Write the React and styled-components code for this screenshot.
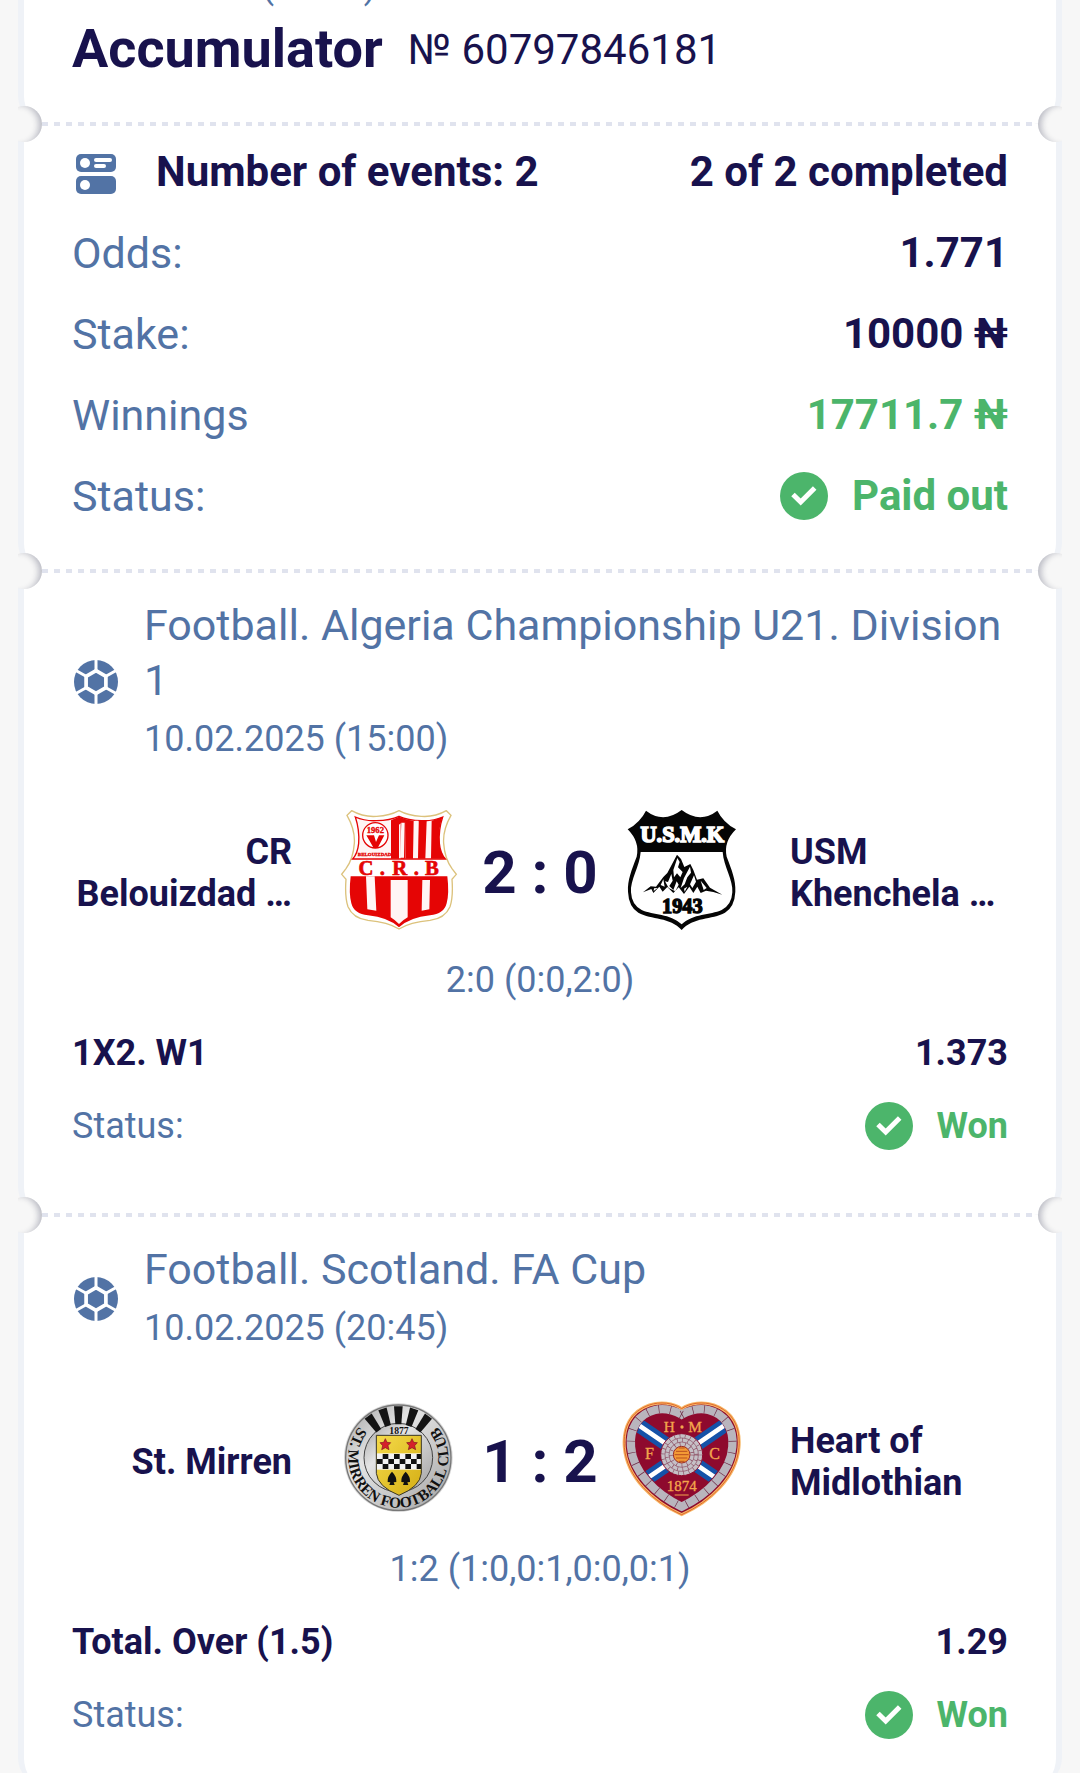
import styled, { createGlobalStyle, css } from 'styled-components';

const NAVY = '#18124d';
const BLUE = '#5273a5';
const GREEN = '#4cb56b';
const PAGE = '#f7f7f7';

const GlobalStyle = createGlobalStyle`
    body {
        margin: 0;
        background: ${PAGE};
        color: ${NAVY};
        font-family: Roboto, "Noto Sans", sans-serif;
    }
    *, *::before, *::after {
        box-sizing: border-box;
    }
    svg {
        display: block;
        flex: none;
    }
`;

// the page is scrolled down a little, so the bet date sits on the top edge
const Ticket = styled.main`
    margin: -35px 18px 0;
    overflow: hidden;
`;

const Section = styled.section`
    padding: ${props => props.$top}px 48px ${props => props.$bottom}px;
    background: #fff;
    border: solid #eff2f7;
    border-width: 0 6px;
    border-radius: 0 0 28px 28px;
`;

const Divider = styled.div`
    position: relative;
    z-index: 1;
    height: 4px;
    margin: -2px 24px;
    background: repeating-linear-gradient(90deg, #e0e3ee 0 6px, transparent 6px 12px);

    &::before, &::after {
        content: '';
        position: absolute;
        top: -16px;
        width: 36px;
        height: 36px;
        border-radius: 50%;
        background: ${PAGE};
    }
    &::before {
        left: -36px;
        box-shadow: inset -6px 1px 6px -3px rgba(24, 30, 60, 0.28);
        clip-path: inset(0 0 0 12px);
    }
    &::after {
        right: -36px;
        box-shadow: inset 6px 1px 6px -3px rgba(24, 30, 60, 0.28);
        clip-path: inset(0 12px 0 0);
    }
`;

const Heading = styled.header`
    display: flex;
    align-items: center;
    gap: 25px;
    margin-top: 9px;
`;

const Title = styled.h1`
    margin: 0;
    font-size: 54px;
    line-height: 66px;
    font-weight: 700;
`;

const BetNumber = styled.span`
    padding-top: 2px;
    font-size: 42px;
    line-height: 48px;
`;

const DateText = styled.time`
    display: block;
    color: ${BLUE};
    font-size: 36px;
    line-height: ${props => props.$small ? '42px' : '54px'};
    margin-top: ${props => props.$small ? '0' : '4px'};
`;

const Rows = styled.div`
    display: flex;
    flex-direction: column;
    gap: ${props => props.$small ? '25px' : '33px'};
    font-size: ${props => props.$small ? '36px' : '42px'};
    line-height: 48px;
`;

const Row = styled.div`
    display: flex;
    align-items: center;
    justify-content: space-between;
`;

const Label = styled.span`
    color: ${BLUE};
    ${props => props.$large && css`font-size: 43px;`}
`;

const Value = styled.span`
    display: flex;
    align-items: center;
    gap: ${props => props.$wide ? '36px' : '24px'};
    font-weight: 700;
    ${props => props.$good && css`color: ${GREEN};`}
`;

const IconSlot = styled.span`
    display: flex;
    flex: none;
    justify-content: center;
    width: 48px;
`;

const League = styled.header`
    display: flex;
    align-items: center;
    gap: 24px;
`;

const LeagueName = styled.h2`
    margin: 0;
    color: ${BLUE};
    font-size: 43px;
    line-height: 55px;
    font-weight: 400;
`;

const Game = styled.div`
    display: grid;
    grid-template-columns: 1fr 120px 162px 120px 1fr;
    align-items: center;
    margin: 44px 0 20px;

    svg {
        margin-bottom: 6px;
    }
`;

const Team = styled.span`
    padding: ${props => props.$home ? '0 47px 0 0' : '0 0 0 49px'};
    text-align: ${props => props.$home ? 'right' : 'left'};
    font-size: 36px;
    line-height: 42px;
    font-weight: 700;
`;

const Score = styled.strong`
    text-align: center;
    font-size: 60px;
    line-height: 66px;
    font-weight: 700;
`;

const Result = styled.span`
    color: ${BLUE};
    text-align: center;
`;

function EventsIcon() {
    return (
        <svg width="40" height="44" viewBox="0 -4 40 44" aria-hidden="true">
            <rect width="40" height="18" rx="5" fill={BLUE} />
            <rect y="22" width="40" height="18" rx="5" fill={BLUE} />
            <g fill="#fff">
                <circle cx="9" cy="9" r="5" />
                <circle cx="9" cy="31" r="5" />
                <rect x="18" y="4" width="18" height="4" rx="2" />
                <rect x="18" y="10" width="12" height="4" rx="2" />
            </g>
        </svg>
    );
}

function FootballIcon() {
    return (
        <svg width="44" height="44" viewBox="0 0 44 44" aria-hidden="true">
            <circle cx="22" cy="22" r="22" fill={BLUE} />
            <g fill="none" stroke="#fff">
                <path strokeWidth="3.7" d="M22 10.6 31.9 16.3V27.7L22 33.4 12.1 27.7V16.3Z" />
                <path strokeWidth="3" d="M22 10.6V-2M22 33.4V46M31.9 16.3 43 10M31.9 27.7 43 34M12.1 16.3 1 10M12.1 27.7 1 34" />
            </g>
        </svg>
    );
}

function CheckIcon() {
    return (
        <svg width="48" height="48" viewBox="0 0 48 48" aria-hidden="true">
            <circle cx="24" cy="24" r="24" fill={GREEN} />
            <path d="M13 22.500 20.700 30 34.700 16" fill="none" stroke="#fff" strokeWidth="5" />
        </svg>
    );
}

function BelouizdadCrest() {
    return (
        <svg width="120" height="120" viewBox="27 60 360 360" role="img" aria-label="CR Belouizdad">
            <path
                d="M65 62Q100 82 140 79Q180 77 207 62Q234 77 274 79Q314 82 349 62L363 76Q338 120 341 160Q344 205 366 236L379 253L366 268Q370 320 360 350Q345 385 300 391Q240 396 207 417Q174 396 114 391Q69 385 54 350Q44 320 48 268L35 253L48 236Q70 205 73 160Q76 120 51 76Z"
                fill="#fff" stroke="#dcc27c" strokeWidth="4"
            />
            <path
                d="M76 81Q105 94 140 92Q180 91 207 79Q234 91 274 92Q309 94 338 81Q325 120 328 160Q331 190 346 207H68Q83 190 86 160Q89 120 76 81Z"
                fill="#fff5f5" stroke="#e50505" strokeWidth="4"
            />
            <path d="M183 91 207 80V206H183ZM207 80 228 88 226 206H212V100L207 104ZM228 88 251 93 249 206H227ZM266 93 290 93 286 206H264ZM305 92 337 82Q324 120 328 160Q331 190 346 206H303Z" fill="#e50505" />
            <path d="M214 98H224L222 203H210ZM254 92H265L263 203H251ZM292 96H303L301 203H289Z" fill="#fff5f5" />
            <circle cx="136" cy="136" r="38" fill="#fff" stroke="#e50505" strokeWidth="4" />
            <path d="M109 136H132L138 156 147 136H163L143 174H131Z" fill="#e50505" />
            <g fontFamily="Liberation Serif, serif" fontWeight="700" fill="#e50505" stroke="#e50505" textAnchor="middle">
                <text x="136" y="129" fontSize="26">1962</text>
                <text x="134" y="199" fontSize="15">BELOUIZDAD</text>
                <g fontSize="62" strokeWidth="2">
                    <text x="108" y="254">C</text>
                    <text x="157" y="254">.</text>
                    <text x="209" y="254">R</text>
                    <text x="259" y="254">.</text>
                    <text x="306" y="254">B</text>
                </g>
            </g>
            <path d="M62 259H352Q358 310 350 340Q342 372 300 376Q240 382 207 412Q174 382 114 376Q72 372 64 340Q56 310 62 259Z" fill="#e50505" />
            <path d="M108 259H134L139 362 112 358ZM182 270H233V382Q219 390 207 402Q195 390 182 382ZM277 270H300L298 358 275 362Z" fill="#fff5f5" />
        </svg>
    );
}

function KhenchelaCrest() {
    return (
        <svg width="120" height="120" viewBox="33 60 360 360" role="img" aria-label="USM Khenchela">
            <path
                d="M108 62Q160 102 215 60Q270 102 322 62Q340 98 378 118Q340 155 350 200C365 240 378 270 376 305Q374 350 345 368C305 390 250 380 215 420C180 380 125 390 85 368Q56 350 54 305C52 270 65 240 80 200Q90 155 53 118Q90 98 108 62Z"
                fill="#050505"
            />
            <path
                d="M92 186H338C341 230 370 270 367 307Q365 345 335 360C300 376 250 370 215 403C180 370 130 376 95 360Q65 345 63 307C60 270 89 230 92 186Z"
                fill="#fff"
            />
            <g fontFamily="Liberation Serif, serif" fontWeight="700" textAnchor="middle">
                <text x="217" y="156" fontSize="67" fill="#fff" stroke="#fff" strokeWidth="5">U.S.M.K</text>
                <text x="217" y="370" fontSize="61" fill="#050505" stroke="#050505" strokeWidth="4">1943</text>
            </g>
            <path d="M99 307 122 289 138 290 160 261 172 249 201 194 213 207 223 231 241 222 250 240 261 269 280 265 300 293 337 314 310 306 288 302 272 309 262 290 250 309 238 290 222 312 206 292 190 309 172 291 158 305 148 290 130 309 124 297Z" fill="#050505" />
            <path d="M202 204 209 216 204 232 218 246 211 262 201 250 192 262 190 240ZM240 230 243 248 232 262 224 283 212 294 222 264ZM252 256 258 275 247 294 240 283ZM184 252 188 272 178 288 190 300 200 274 206 284 196 304 176 294 165 274 174 276ZM160 268 164 290 152 285ZM272 272 290 294 281 300ZM132 295 143 294 131 303ZM222 296 232 290 224 305Z" fill="#fff" />
        </svg>
    );
}

function MirrenCrest() {
    const cells = [];
    for (let row = 0; row < 3; row++) {
        for (let col = 0; col < 8; col++) {
            if ((row + col) % 2 === 1) {
                cells.push(<rect key={`${row}-${col}`} x={141 + col * 17} y={192 + row * 15} width="17" height="15" />);
            }
        }
    }
    return (
        <svg width="120" height="120" viewBox="27 27 360 360" role="img" aria-label="St. Mirren">
            <defs>
                <linearGradient id="silver" x1="0" y1="0" x2="1" y2="1">
                    <stop offset="0" stopColor="#a2a2a2" />
                    <stop offset="0.35" stopColor="#e4e4e4" />
                    <stop offset="0.65" stopColor="#c6c6c6" />
                    <stop offset="1" stopColor="#a0a0a0" />
                </linearGradient>
                <linearGradient id="gold" x1="0" y1="0" x2="1" y2="1">
                    <stop offset="0" stopColor="#f6dc4c" />
                    <stop offset="1" stopColor="#d3ac12" />
                </linearGradient>
                <path id="ring" d="M99 97A150 150 0 1 0 311 97" />
                <clipPath id="mirrenShield">
                    <path d="M139 136H274V250Q270 290 207 316Q143 290 139 250Z" />
                </clipPath>
            </defs>
            <circle cx="205" cy="203" r="163" fill="#d6d6d6" />
            <circle cx="205" cy="203" r="158" fill="url(#silver)" stroke="#777" strokeWidth="4" />
            <circle cx="205" cy="203" r="103" fill="url(#silver)" stroke="#444" strokeWidth="3" />
            <g fill="#141414">
                {[-36, -18, 0, 18, 36].map(angle => (
                    <path key={angle} d="M192 49H218L214 103H196Z" transform={`rotate(${angle} 205 203)`} />
                ))}
            </g>
            <g fontFamily="Liberation Serif, serif" fontWeight="700" fill="#111">
                <text fontSize="46">
                    <textPath href="#ring" startOffset="50%" textAnchor="middle">ST. MIRREN FOOTBALL CLUB</textPath>
                </text>
                <text x="207" y="131" fontSize="29" textAnchor="middle">1877</text>
            </g>
            <g clipPath="url(#mirrenShield)">
                <rect x="135" y="130" width="145" height="190" fill="url(#gold)" />
                <rect x="139" y="190" width="136" height="49" fill="#f3f3f3" />
                <g fill="#111">{cells}</g>
            </g>
            <path d="M139 136H274V250Q270 290 207 316Q143 290 139 250Z" fill="none" stroke="#3a3520" strokeWidth="3" />
            <g fill="#d5202b" stroke="#7e1620" strokeWidth="2">
                <path d="M166 146 171 157 182 158 174 167 177 179 166 173 155 179 158 167 150 158 161 157Z" />
                <path d="M246 146 251 157 262 158 254 167 257 179 246 173 235 179 238 167 230 158 241 157Z" />
            </g>
            <path d="M186 245Q201 260 199 276L191 277 194 285H178L181 277 173 276Q171 260 186 245ZM227 245Q242 260 240 276L232 277 235 285H219L222 277 214 276Q212 260 227 245Z" fill="#111" />
        </svg>
    );
}

function HeartsCrest() {
    const heart = 'M215 56C190 38 150 34 118 45C62 64 38 112 43 172C50 262 130 336 215 374C300 336 380 262 387 172C392 112 368 64 312 45C280 34 240 38 215 56Z';
    const stones = 'M215 74C185 58 160 54 135 60C85 72 58 115 63 170C68 245 135 312 215 350C295 312 362 245 367 170C372 115 345 72 295 60C270 54 245 58 215 74Z';
    return (
        <svg width="120" height="120" viewBox="33 27 360 360" role="img" aria-label="Heart of Midlothian">
            <defs>
                <clipPath id="heartField">
                    <path d="M215 88C190 72 160 68 138 73C95 84 73 120 78 170C83 235 145 298 215 334C285 298 347 235 352 170C357 120 335 84 292 73C270 68 240 72 215 88Z" />
                </clipPath>
            </defs>
            <path d={heart} fill="#8e0a2e" stroke="#f7b867" strokeWidth="9" />
            <path d={heart} fill="none" stroke="#e0662c" strokeWidth="3" />
            <path d={stones} fill="none" stroke="#b9b5bd" strokeWidth="25" />
            <path d={stones} fill="none" stroke="#6e2a44" strokeWidth="25" strokeDasharray="2 33" />
            <g clipPath="url(#heartField)">
                <path d="M75 98 355 290M355 98 75 290" stroke="#1552a8" strokeWidth="42" />
                <path d="M75 98 355 290M355 98 75 290" stroke="#fff" strokeWidth="14" />
            </g>
            <circle cx="215" cy="194" r="63" fill="#c5c0c6" stroke="#8e0a2e" strokeWidth="3" />
            <g fill="none" stroke="#8a4a60" strokeWidth="2">
                <circle cx="215" cy="194" r="50" />
                <circle cx="215" cy="194" r="38" />
                <g strokeWidth="12" strokeDasharray="2 14">
                    <circle cx="215" cy="194" r="56" />
                    <circle cx="215" cy="194" r="44" />
                    <circle cx="215" cy="194" r="32" />
                </g>
            </g>
            <circle cx="215" cy="194" r="25" fill="#f39a35" stroke="#9a2a28" strokeWidth="3" />
            <path d="M198 184H232M194 194H236M198 204H232M206 174H224M206 214H224" stroke="#b9501f" strokeWidth="3" />
            <g fontFamily="Liberation Serif, serif" fill="#f3a64c" stroke="#f3a64c" textAnchor="middle">
                <text x="178" y="126" fontSize="46">H</text>
                <text x="255" y="126" fontSize="46">M</text>
                <text x="118" y="208" fontSize="48">F</text>
                <text x="314" y="208" fontSize="48">C</text>
                <text x="215" y="303" fontSize="45">1874</text>
            </g>
            <circle cx="216" cy="111" r="5" fill="#f3a64c" />
            <path d="M194 315H236" stroke="#f3a64c" strokeWidth="3" />
        </svg>
    );
}

const matches = [
    {
        league: 'Football. Algeria Championship U21. Division 1',
        date: '10.02.2025 (15:00)',
        home: 'CR Belouizdad …',
        away: 'USM Khenchela …',
        HomeCrest: BelouizdadCrest,
        AwayCrest: KhenchelaCrest,
        score: '2 : 0',
        result: '2:0 (0:0,2:0)',
        bet: '1X2. W1',
        odds: '1.373',
    },
    {
        league: 'Football. Scotland. FA Cup',
        date: '10.02.2025 (20:45)',
        home: 'St. Mirren',
        away: 'Heart of Midlothian',
        HomeCrest: MirrenCrest,
        AwayCrest: HeartsCrest,
        score: '1 : 2',
        result: '1:2 (1:0,0:1,0:0,0:1)',
        bet: 'Total. Over (1.5)',
        odds: '1.29',
    },
];

function Match({ match, last }) {
    const { HomeCrest, AwayCrest } = match;
    return (
        <Section $top={27} $bottom={last ? 47 : 65}>
            <League>
                <IconSlot><FootballIcon /></IconSlot>
                <div>
                    <LeagueName>{match.league}</LeagueName>
                    <DateText>{match.date}</DateText>
                </div>
            </League>
            <Game>
                <Team $home>{match.home}</Team>
                <HomeCrest />
                <Score>{match.score}</Score>
                <AwayCrest />
                <Team>{match.away}</Team>
            </Game>
            <Rows $small>
                <Result>{match.result}</Result>
                <Row>
                    <Value>{match.bet}</Value>
                    <Value>{match.odds}</Value>
                </Row>
                <Row>
                    <Label>Status:</Label>
                    <Value $good><CheckIcon />Won</Value>
                </Row>
            </Rows>
        </Section>
    );
}

function App() {
    return (
        <>
            <GlobalStyle />
            <Ticket>
                <Section $top={0} $bottom={42}>
                    <DateText $small>10.02.2025 (14:12)</DateText>
                    <Heading>
                        <Title>Accumulator</Title>
                        <BetNumber>№ 60797846181</BetNumber>
                    </Heading>
                </Section>
                <Divider />
                <Section $top={24} $bottom={51}>
                    <Rows>
                        <Row>
                            <Value $wide>
                                <IconSlot><EventsIcon /></IconSlot>
                                Number of events: 2
                            </Value>
                            <Value>2 of 2 completed</Value>
                        </Row>
                        <Row>
                            <Label $large>Odds:</Label>
                            <Value>1.771</Value>
                        </Row>
                        <Row>
                            <Label $large>Stake:</Label>
                            <Value>10000 ₦</Value>
                        </Row>
                        <Row>
                            <Label $large>Winnings</Label>
                            <Value $good>17711.7 ₦</Value>
                        </Row>
                        <Row>
                            <Label $large>Status:</Label>
                            <Value $good><CheckIcon />Paid out</Value>
                        </Row>
                    </Rows>
                </Section>
                {matches.map((match, index) => (
                    <div key={match.date}>
                        <Divider />
                        <Match match={match} last={index === matches.length - 1} />
                    </div>
                ))}
            </Ticket>
        </>
    );
}

export default App;
